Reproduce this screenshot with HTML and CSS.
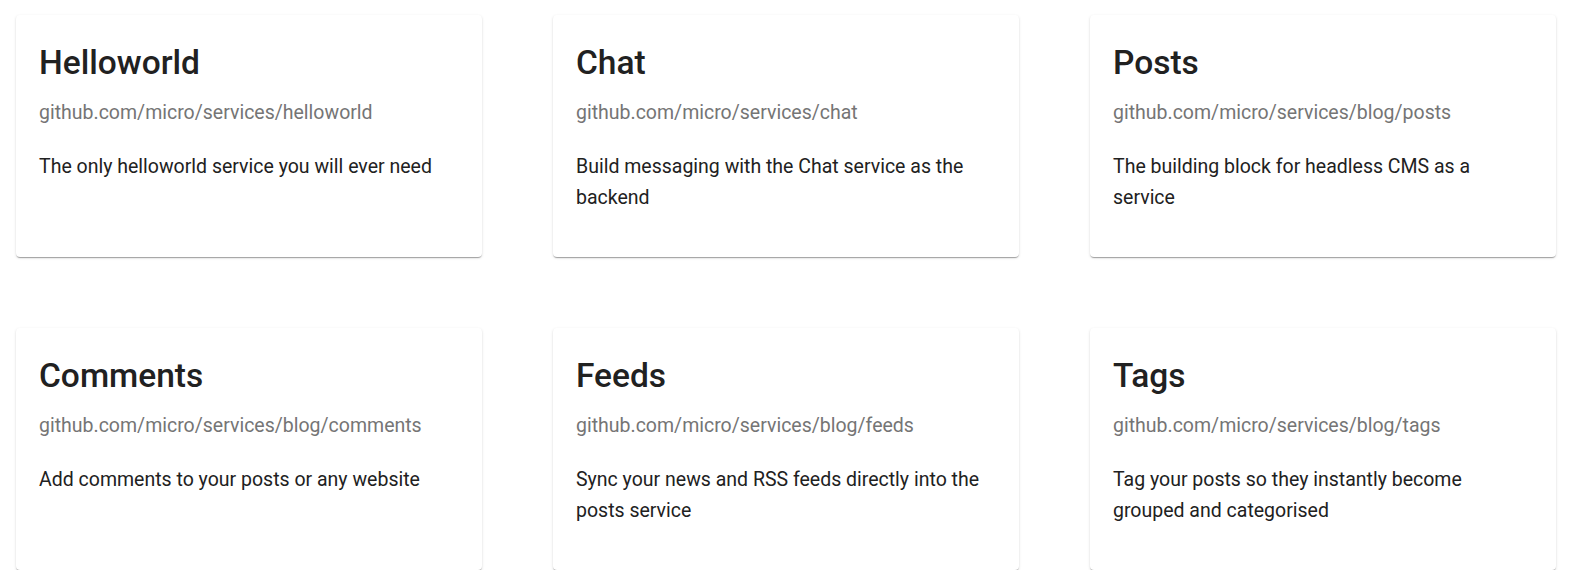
FILE: index.html
```html
<!DOCTYPE html>
<html>
<head>
<meta charset="utf-8">
<link rel="stylesheet" href="styles.css">
</head>
<body>
<div class="grid">
  <div class="card">
    <h2 class="title">Helloworld</h2>
    <div class="repo">github.com/micro/services/helloworld</div>
    <p class="desc">The only helloworld service you will ever need</p>
  </div>
  <div class="card">
    <h2 class="title">Chat</h2>
    <div class="repo">github.com/micro/services/chat</div>
    <p class="desc">Build messaging with the Chat service as the backend</p>
  </div>
  <div class="card">
    <h2 class="title">Posts</h2>
    <div class="repo">github.com/micro/services/blog/posts</div>
    <p class="desc">The building block for headless CMS as a service</p>
  </div>
  <div class="card">
    <h2 class="title">Comments</h2>
    <div class="repo">github.com/micro/services/blog/comments</div>
    <p class="desc">Add comments to your posts or any website</p>
  </div>
  <div class="card">
    <h2 class="title">Feeds</h2>
    <div class="repo">github.com/micro/services/blog/feeds</div>
    <p class="desc">Sync your news and RSS feeds directly into the posts service</p>
  </div>
  <div class="card">
    <h2 class="title">Tags</h2>
    <div class="repo">github.com/micro/services/blog/tags</div>
    <p class="desc">Tag your posts so they instantly become grouped and categorised</p>
  </div>
</div>
</body>
</html>
```
FILE: styles.css
```css
html, body {
  margin: 0;
  padding: 0;
  background: #ffffff;
  font-family: Roboto, "Liberation Sans", sans-serif;
}
.grid {
  display: grid;
  grid-template-columns: repeat(3, 1fr);
  column-gap: 71px;
  row-gap: 71px;
  padding: 15px 15px 0 16px;
}
.card {
  background: #fff;
  border-radius: 4px;
  box-shadow: 0 2px 1px -1px rgba(0,0,0,0.2), 0 1px 1px 0 rgba(0,0,0,0.14), 0 1px 3px 0 rgba(0,0,0,0.12);
  padding: 24px 23px;
  height: 242px;
  box-sizing: border-box;
}
.title {
  margin: 0;
  font-size: 33.5px;
  font-weight: 500;
  line-height: 48px;
  color: #212121;
}
.repo {
  margin-top: 14px;
  font-size: 19.5px;
  line-height: 24px;
  color: #757575;
}
.desc {
  margin: 26px 0 0;
  font-size: 19.5px;
  line-height: 31px;
  color: #212121;
}
```
